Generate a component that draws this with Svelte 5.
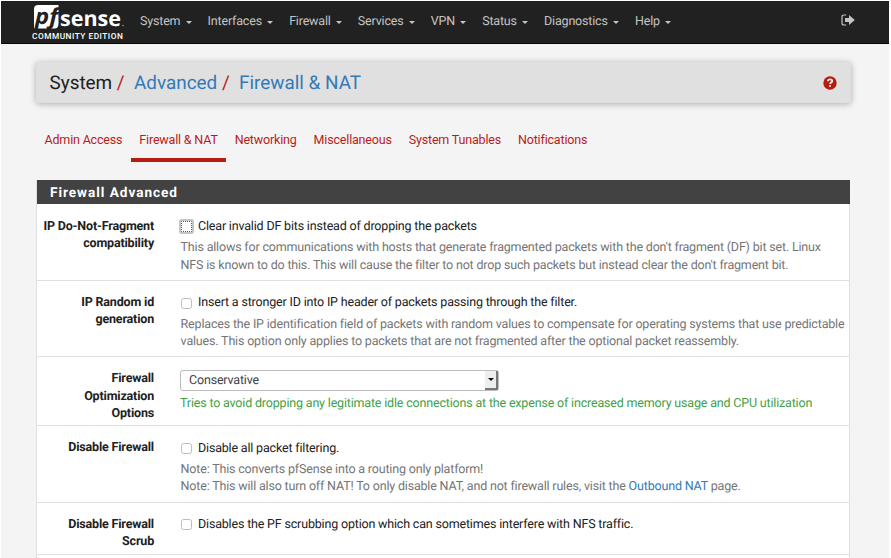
<script>
  const menus = ['System', 'Interfaces', 'Firewall', 'Services', 'VPN', 'Status', 'Diagnostics', 'Help'];
  const tabs = ['Admin Access', 'Firewall & NAT', 'Networking', 'Miscellaneous', 'System Tunables', 'Notifications'];
  let active = $state('Firewall & NAT');
</script>

<div class="page">
  <header>
    <div class="brand">
      <svg width="100" height="36" viewBox="0 -6 100 36" aria-label="pfsense">
        <path d="M5 0h20.500v18.500q0 5-4 5H1V4q0-4 4-4Z" fill="#fff" />
        <text class="pf" x="2" y="18.500" textLength="23" lengthAdjust="spacingAndGlyphs">pf</text>
        <text class="sense" x="27" y="21" textLength="61" lengthAdjust="spacingAndGlyphs">sense</text>
        <circle cx="90" cy="20.500" r=".8" fill="#999" />
      </svg>
      <div class="edition">COMMUNITY EDITION</div>
    </div>
    <nav>
      {#each menus as menu}
        <a href="#menu">{menu}<i class="caret"></i></a>
      {/each}
    </nav>
    <svg class="logout" width="14" height="12" viewBox="0 0 14 12">
      <path d="M5.200 1H3Q1 1 1 3v6q0 2 2 2h2.200" fill="none" stroke="#c4c4c4" stroke-width="1.200" />
      <path d="M4 4h4V1l5.800 5L8 11V8H4Z" fill="#c4c4c4" />
    </svg>
  </header>

  <main>
    <div class="crumbs">
      <span>System</span><b>/</b><a href="#advanced">Advanced</a><b>/</b><a href="#nat">Firewall &amp; NAT</a>
      <svg class="help" width="14" height="14" viewBox="0 0 14 14">
        <circle cx="7" cy="7" r="6.700" fill="#b71c12" />
        <path d="M4.900 5.300Q5 3.300 7.100 3.300q2.100 0 2.100 1.700 0 1-1.200 1.600-.9.500-.9 1.400" fill="none" stroke="#eee" stroke-width="1.800" />
        <path d="M6.100 9h1.900v1.800H6.100Z" fill="#eee" />
      </svg>
    </div>

    <div class="tabs">
      {#each tabs as tab}
        <button class:active={active === tab} onclick={() => (active = tab)}>{tab}</button>
      {/each}
    </div>

    <section>
      <h2>Firewall Advanced</h2>
      <div class="row r1">
        <div class="label">IP Do-Not-Fragment<br />compatibility</div>
        <div class="field">
          <label><input type="checkbox" class="focused" /><span>Clear invalid DF bits instead of dropping the packets</span></label>
          <p>This allows for communications with hosts that generate fragmented packets with the don't fragment (DF) bit set. Linux<br />NFS is known to do this. This will cause the filter to not drop such packets but instead clear the don't fragment bit.</p>
        </div>
      </div>
      <div class="row">
        <div class="label">IP Random id<br />generation</div>
        <div class="field">
          <label><input type="checkbox" /><span>Insert a stronger ID into IP header of packets passing through the filter.</span></label>
          <p>Replaces the IP identification field of packets with random values to compensate for operating systems that use predictable<br />values. This option only applies to packets that are not fragmented after the optional packet reassembly.</p>
        </div>
      </div>
      <div class="row r3">
        <div class="label">Firewall<br />Optimization<br />Options</div>
        <div class="field">
          <div class="select"><span>Conservative</span><div class="arrow"><i></i></div></div>
          <p class="green">Tries to avoid dropping any legitimate idle connections at the expense of increased memory usage and CPU utilization</p>
        </div>
      </div>
      <div class="row">
        <div class="label">Disable Firewall</div>
        <div class="field">
          <label><input type="checkbox" /><span>Disable all packet filtering.</span></label>
          <p>Note: This converts pfSense into a routing only platform!<br />Note: This will also turn off NAT! To only disable NAT, and not firewall rules, visit the <a href="#outbound">Outbound NAT</a> page.</p>
        </div>
      </div>
      <div class="row r5">
        <div class="label">Disable Firewall<br />Scrub</div>
        <div class="field">
          <label><input type="checkbox" /><span>Disables the PF scrubbing option which can sometimes interfere with NFS traffic.</span></label>
        </div>
      </div>
      <div class="row"></div>
    </section>
  </main>
</div>

<style>
  :global(body) { background: #fff; overflow: hidden; }
  .page {
    box-sizing: border-box; width: 891px; height: 558px; padding: 1px 2px 0 1px;
    overflow: hidden; background: #fff; color: #212121;
    font: 12.5px/17.4px Roboto, sans-serif; letter-spacing: -.178px; text-rendering: geometricPrecision;
  }
  a { color: #337ab7; text-decoration: none; }
  header {
    box-sizing: border-box; height: 43px; display: flex; background: #212121;
    border-bottom: 1px solid #080808; padding-left: 31px;
  }
  .brand { width: 108px; padding-top: 4px; letter-spacing: 0; }
  .brand svg { display: block; margin: -6px 0 -6px 1px; }
  .pf { font: italic bold 22px "Open Sans", sans-serif; fill: #212121; }
  .sense { font: bold 21px "Open Sans", sans-serif; fill: #fff; }
  .edition { font-size: 8.3px; line-height: 10px; font-weight: 500; color: #fff; letter-spacing: .5px; white-space: nowrap; margin-top: 3px; }
  nav { display: flex; gap: 15.7px; padding-top: 12px; }
  nav a { color: #c4c4c4; display: flex; align-items: center; height: 18px; }
  .caret { margin: 0 0 0 5.5px; border: 3.5px solid transparent; border-top-color: #c4c4c4; border-bottom: 0; }
  .logout { margin: 13px 34px 0 auto; }
  main { background: #f4f4f4; height: 514px; padding: 18px 38px 0 35px; box-sizing: border-box; }
  .crumbs {
    height: 41px; display: flex; align-items: center; background: #e0e0e0; border-radius: 3px;
    box-shadow: 0 1px 6px rgba(0, 0, 0, .3); padding: 0 14px 0 13.5px; font-size: 18.9px; letter-spacing: 0;
  }
  .crumbs b { color: #b71c1c; font-weight: 400; margin: 0 9.3px 0 4.7px; }
  .help { margin-left: auto; }
  .tabs { display: flex; margin-top: 26px; }
  .tabs button {
    font: inherit; letter-spacing: inherit; color: #b71c1c; background: none; border: 0; border-bottom: 4px solid transparent;
    padding: 2px 8.5px 13px 8.5px; height: 33px; white-space: nowrap;
  }
  .tabs .active { border-bottom-color: #b71c12; }
  section { margin: 18px 1px 0 0; background: #fff; border: 1px solid #e0e0e0; border-top: 0; }
  h2 {
    box-sizing: border-box; margin: 0 -1px 0 0; height: 24px; line-height: 24px; padding: 1px 0 0 13px;
    background: #424242; color: #fff; font-size: 13.6px; font-weight: 700; letter-spacing: .96px;
  }
  .row { box-sizing: border-box; height: 76.2px; border-bottom: 1px solid #e0e0e0; display: flex; padding-top: 13px; }
  .r1 { height: 77px; padding-top: 13.8px; }
  .r3 { height: 69.300px; }
  .r5 { height: 52.200px; }
  .label { width: 117px; flex: none; text-align: right; font-weight: 700; }
  .field { padding-left: 26px; white-space: nowrap; }
  label { display: flex; align-items: center; height: 18px; }
  input {
    appearance: none; box-sizing: border-box; width: 11px; height: 11px; margin: 0 6px 0 1px;
    border: 1px solid #bdbdbd; border-radius: 2.5px; background: #fff;
  }
  .focused { border: 1px dotted #555; border-radius: 1px; box-shadow: 0 0 0 2px #c5c5c5; margin-top: -1px; }
  p { margin: 3.500px 0 0 .6px; color: #757575; }
  .select {
    box-sizing: border-box; width: 319px; height: 21px; border: 1px solid #bbb; border-radius: 3px; margin-top: -.5px;
    display: flex; justify-content: space-between; align-items: center; padding-left: 8px; color: #424242;
  }
  .select span { padding-top: 1px; }
  .arrow {
    box-sizing: border-box; width: 13px; height: 19px; background: #eee;
    border-right: 2px solid #777; border-bottom: 2px solid #777; display: flex; align-items: center; justify-content: center;
  }
  .arrow i { border: 3px solid transparent; border-top-color: #111; border-bottom: 0; }
  .green { color: #43a047; margin-left: 0; margin-top: 4px; }
</style>
